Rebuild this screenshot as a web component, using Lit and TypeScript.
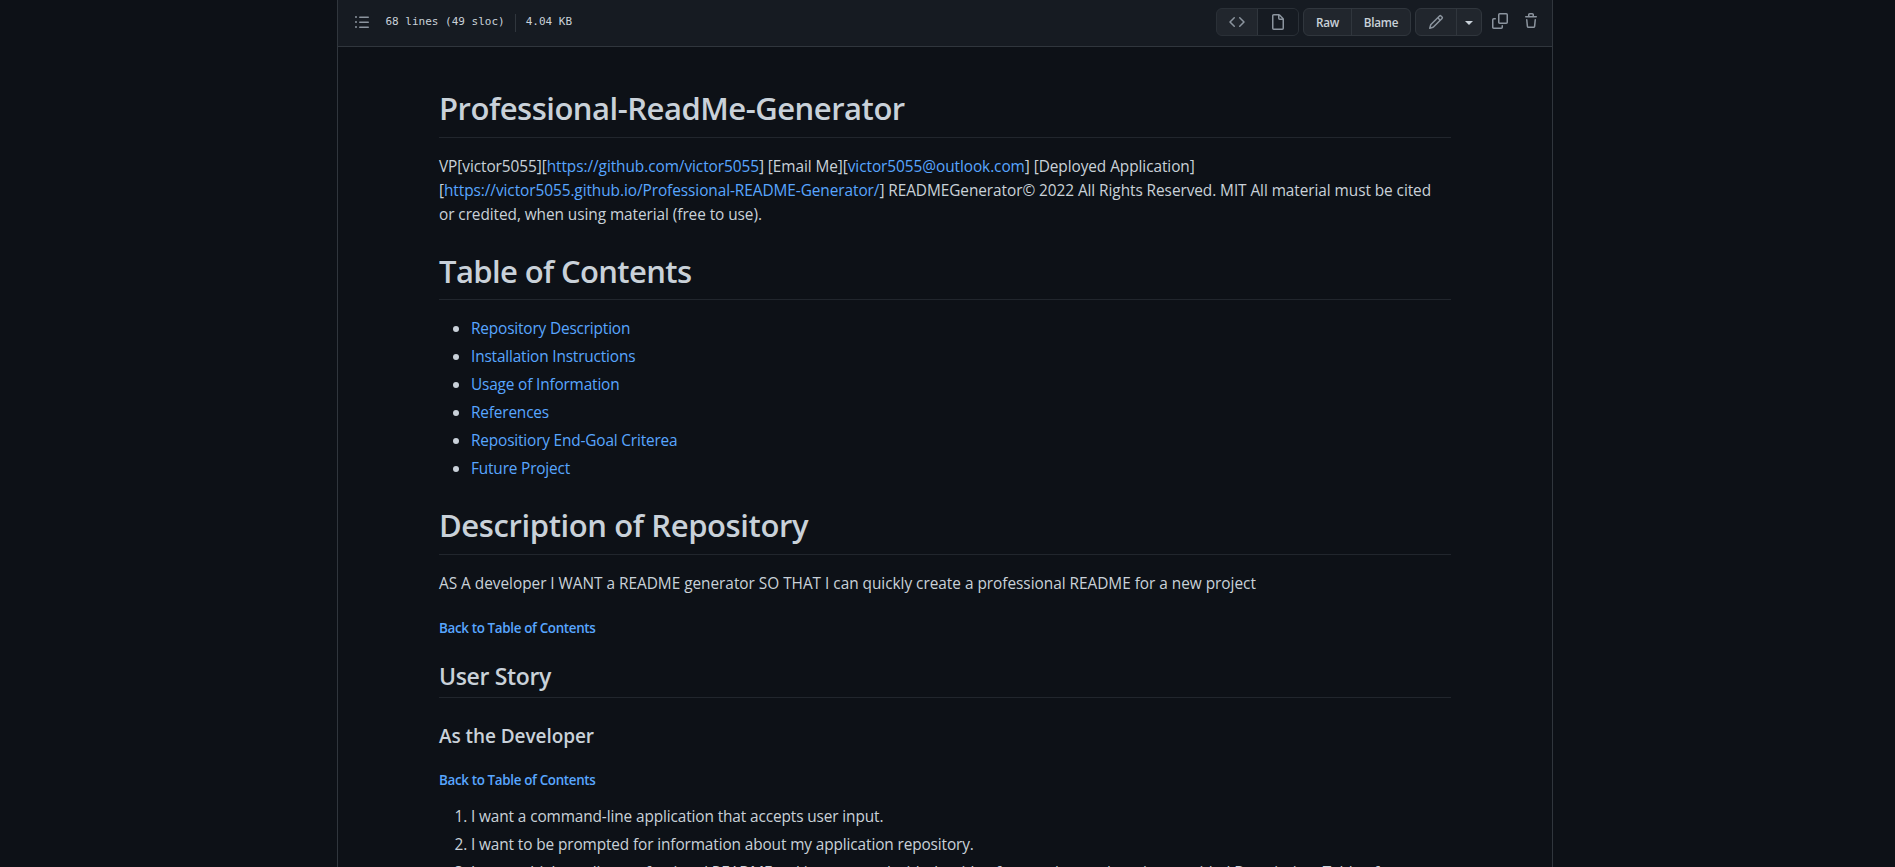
import { LitElement, html, css, svg } from "lit";
import { customElement } from "lit/decorators.js";

const toc = ["Repository Description", "Installation Instructions", "Usage of Information", "References", "Repositiory End-Goal Criterea", "Future Project"];
const stories = [
  "I want a command-line application that accepts user input.",
  "I want to be prompted for information about my application repository.",
  "I want a high-quality, professional README.md is generated with the title of my project and sections entitled Description, Table of",
];

const icons = {
  list: "M2 4a1 1 0 100-2 1 1 0 000 2zm3.75-1.5a.75.75 0 000 1.5h8.5a.75.75 0 000-1.5h-8.5zm0 5a.75.75 0 000 1.5h8.5a.75.75 0 000-1.5h-8.5zm0 5a.75.75 0 000 1.5h8.5a.75.75 0 000-1.5h-8.5zM3 8a1 1 0 11-2 0 1 1 0 012 0zm-1 6a1 1 0 100-2 1 1 0 000 2z",
  code: "M4.72 3.22a.75.75 0 011.06 1.06L2.06 8l3.72 3.72a.75.75 0 11-1.06 1.06L.47 8.53a.75.75 0 010-1.06l4.25-4.25zm6.56 0a.75.75 0 10-1.06 1.06L13.94 8l-3.72 3.72a.75.75 0 101.06 1.06l4.25-4.25a.75.75 0 000-1.06l-4.25-4.25z",
  file: "M3.75 1.5a.25.25 0 00-.25.25v12.5c0 .138.112.25.25.25h8.5a.25.25 0 00.25-.25V6H9.75A1.75 1.75 0 018 4.25V1.5H3.75zm5.75.56v2.19c0 .138.112.25.25.25h2.19L9.5 2.06zM2 1.75C2 .784 2.784 0 3.75 0h5.086c.464 0 .909.184 1.237.513l3.414 3.414c.329.328.513.773.513 1.237v9.086A1.75 1.75 0 0112.25 16h-8.5A1.75 1.75 0 012 14.25V1.75z",
  pencil: "M11.013 1.427a1.75 1.75 0 012.474 0l1.086 1.086a1.75 1.75 0 010 2.474l-8.61 8.61c-.21.21-.47.364-.756.445l-3.251.93a.75.75 0 01-.927-.928l.929-3.25a1.75 1.75 0 01.445-.758l8.61-8.61zm1.414 1.06a.25.25 0 00-.354 0L10.811 3.75l1.439 1.44 1.263-1.263a.25.25 0 000-.354l-1.086-1.086zM11.189 6.25L9.75 4.81l-6.286 6.287a.25.25 0 00-.064.108l-.558 1.953 1.953-.558a.249.249 0 00.108-.064l6.286-6.286z",
  copy: "M7.75 0A1.75 1.75 0 006 1.75v7.5C6 10.216 6.784 11 7.75 11h6.5A1.75 1.75 0 0016 9.25v-7.5A1.75 1.75 0 0014.25 0h-6.5zM7.5 1.75a.25.25 0 01.25-.25h6.5a.25.25 0 01.25.25v7.5a.25.25 0 01-.25.25h-6.5a.25.25 0 01-.25-.25v-7.5zM1.75 5A1.75 1.75 0 000 6.75v7.5C0 15.216.784 16 1.75 16h7.5A1.75 1.75 0 0011 14.25v-1.5a.75.75 0 00-1.5 0v1.5a.25.25 0 01-.25.25h-7.5a.25.25 0 01-.25-.25v-7.5a.25.25 0 01.25-.25h1.5a.75.75 0 000-1.5h-1.5z",
  trash: "M6.5 1.75a.25.25 0 01.25-.25h2.5a.25.25 0 01.25.25V3h-3V1.75zm4.5 0V3h2.25a.75.75 0 010 1.5H2.75a.75.75 0 010-1.5H5V1.75C5 .784 5.784 0 6.75 0h2.5C10.216 0 11 .784 11 1.75zM4.496 6.675a.75.75 0 10-1.492.15l.66 6.6A1.75 1.75 0 005.405 15h5.19c.9 0 1.652-.681 1.741-1.576l.66-6.6a.75.75 0 00-1.492-.149l-.66 6.6a.25.25 0 01-.249.225h-5.19a.25.25 0 01-.249-.225l-.66-6.6z",
};
const icon = (name: keyof typeof icons) =>
  html`<svg width="16" height="16" viewBox="0 0 16 16">${svg`<path fill-rule="evenodd" d=${icons[name]} />`}</svg>`;

@customElement("app-root")
export class AppRoot extends LitElement {
  static styles = css`
    :host { display: block; height: 867px; overflow: hidden; background: #0d1117; color: #c9d1d9; font: 15.4px/24px "Open Sans", "Noto Sans", sans-serif; letter-spacing: -0.07px; }
    * { box-sizing: border-box; }
    .box { width: 1216px; height: 867px; margin-left: 337px; border: solid #30363d; border-width: 0 1px; overflow: hidden; }
    .head { height: 47px; background: #161b22; border-bottom: 1px solid #30363d; display: flex; align-items: center; justify-content: space-between; padding: 0 13px 2px 16px; }
    .meta { display: flex; align-items: center; font: 11px/18px "DejaVu Sans Mono", monospace; letter-spacing: 0; }
    .meta svg { margin-right: 15.5px; }
    .meta span { margin-top: -1px; }
    .meta .divider { width: 1px; height: 18px; margin: 2px 10px 0 10px; background: #30363d; }
    .tools { display: flex; align-items: center; }
    .group { display: flex; height: 28px; margin-right: 4px; border: 1px solid #30363d; border-radius: 6px; background: #21262d; overflow: hidden; font-size: 11.7px; font-weight: 600; line-height: 27px; letter-spacing: -0.25px; }
    .cell { display: flex; align-items: center; justify-content: center; }
    .cell + .cell { border-left: 1px solid #30363d; }
    .w40 { width: 40px; }
    .w41 { width: 41px; }
    .raw { width: 47px; }
    .blame { width: 59px; }
    .arrow { width: 25px; }
    .caret { border: 4px solid transparent; border-top-color: #c9d1d9; border-bottom: 0; margin-top: 1px; }
    .dim { background: #161b22; }
    .view { border-color: #2a3037; }
    .copy { margin: 0 15px 2px 6px; }
    .trash { margin-bottom: 2px; }
    svg { fill: #8b949e; display: block; }
    article { width: 1012px; margin: 0 auto; padding-top: 40px; }
    h1, h2, h3, h5, p, ul, ol { margin: 0; }
    h1, h2, h3, h5 { font-weight: 600; }
    h1 { font-size: 31px; line-height: 42px; padding-bottom: 7.6px; border-bottom: 1px solid #21262d; margin: 24px 0 16px; letter-spacing: -0.48px; }
    h1:first-child { margin-top: 0; }
    h1.contents { letter-spacing: -0.62px; }
    h1.description { letter-spacing: -0.39px; }
    p { padding-top: 1.4px; margin-bottom: -1.4px; }
    p.wide { letter-spacing: -0.027px; }
    h2 { font-size: 23px; line-height: 32px; padding-bottom: 5px; border-bottom: 1px solid #21262d; margin: 22.8px 0 24px; letter-spacing: -0.35px; }
    h3 { font-size: 19px; line-height: 29px; margin: 24px 0 0; }
    h5 { font-size: 13.4px; line-height: 18.5px; margin: 24px 0 15px; letter-spacing: -0.34px; }
    h5.after-h3 { margin-top: 20px; }
    h5:not(.after-h3) { margin-bottom: 0; }
    a { color: #58a6ff; text-decoration: none; }
    ul, ol { padding-left: 32px; }
    li + li { margin-top: 4px; }
    li { white-space: nowrap; letter-spacing: -0.12px; }
    ul li { display: flex; align-items: center; height: 24px; letter-spacing: -0.17px; }
    ul a { padding-top: 2px; }
    ul li::before { content: ""; width: 6px; height: 6px; border-radius: 50%; background: #c9d1d9; margin: 1px 12px 0 -18px; }
  `;
  render() {
    return html`<div class="box">
      <div class="head">
        <div class="meta">${icon("list")}<span>68 lines (49 sloc)</span><span class="divider"></span><span>4.04 KB</span></div>
        <div class="tools">
          <div class="group view"><span class="cell w40">${icon("code")}</span><span class="cell w41 dim">${icon("file")}</span></div>
          <div class="group"><span class="cell raw">Raw</span><span class="cell blame">Blame</span></div>
          <div class="group"><span class="cell w40">${icon("pencil")}</span><span class="cell arrow"><i class="caret"></i></span></div>
          <span class="copy">${icon("copy")}</span><span class="trash">${icon("trash")}</span>
        </div>
      </div>
      <article>
        <h1>Professional-ReadMe-Generator</h1>
        <p>VP[victor5055][<a>https://github.com/victor5055</a>] [Email Me][<a>victor5055@outlook.com</a>] [Deployed Application]<br />[<a>https://victor5055.github.io/Professional-README-Generator/</a>] READMEGenerator© 2022 All Rights Reserved. MIT All material must be cited<br />or credited, when using material (free to use).</p>
        <h1 class="contents">Table of Contents</h1>
        <ul>${toc.map((t) => html`<li><a>${t}</a></li>`)}</ul>
        <h1 class="description">Description of Repository</h1>
        <p class="wide">AS A developer I WANT a README generator SO THAT I can quickly create a professional README for a new project</p>
        <h5><a>Back to Table of Contents</a></h5>
        <h2>User Story</h2>
        <h3>As the Developer</h3>
        <h5 class="after-h3"><a>Back to Table of Contents</a></h5>
        <ol>${stories.map((t) => html`<li>${t}</li>`)}</ol>
      </article></div>`;
  }
}
